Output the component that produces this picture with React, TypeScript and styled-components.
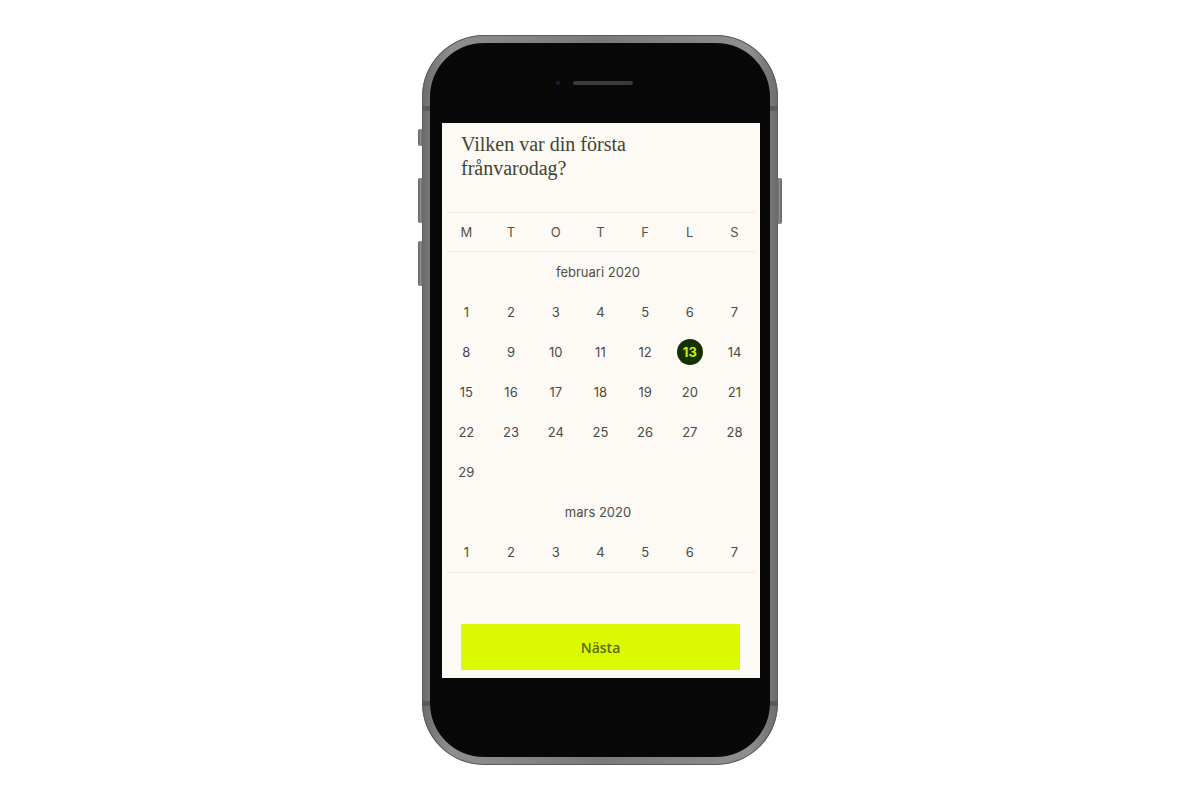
import { createGlobalStyle, styled } from 'styled-components';

const GlobalStyle = createGlobalStyle`
  html, body {
    margin: 0;
    padding: 0;
    background: #ffffff;
  }
  * {
    box-sizing: border-box;
  }
`;

const Page = styled.div`
  width: 1200px;
  height: 800px;
  display: flex;
  align-items: center;
  justify-content: center;
`;

const Phone = styled.div`
  position: relative;
  width: 356px;
  height: 730px;
  padding: 8px;
  border-radius: 62px;
  background: linear-gradient(90deg, #6d6d6d 0%, #8e8e8e 8%, #7a7a7a 50%, #8e8e8e 92%, #6d6d6d 100%);
  box-shadow: inset 0 0 0 1px #5c5c5c;
`;

const SideButton = styled.div<{ $side: 'left' | 'right'; $top: number; $height: number }>`
  position: absolute;
  ${(p) => (p.$side === 'left' ? 'left: -4px;' : 'right: -4px;')}
  top: ${(p) => p.$top}px;
  width: 5px;
  height: ${(p) => p.$height}px;
  border-radius: 2px;
  background: linear-gradient(90deg, #5e5e5e, #8c8c8c, #5e5e5e);
`;

const Band = styled.div<{ $side: 'left' | 'right'; $top: number }>`
  position: absolute;
  ${(p) => (p.$side === 'left' ? 'left: 0;' : 'right: 0;')}
  top: ${(p) => p.$top}px;
  width: 8px;
  height: 5px;
  background: #5a5a5a;
`;

const Inner = styled.div`
  width: 100%;
  height: 100%;
  border-radius: 54px;
  background: #080808;
  display: flex;
  flex-direction: column;
  padding: 0 10px 79px 12px;
`;

const TopArea = styled.div`
  height: 80px;
  display: flex;
  align-items: center;
  justify-content: center;
  gap: 13px;
  padding-right: 14px;
`;

const Camera = styled.div`
  width: 4px;
  height: 4px;
  border-radius: 50%;
  background: #1c2140;
`;

const Speaker = styled.div`
  width: 60px;
  height: 4px;
  border-radius: 2px;
  background: #3a3a3a;
`;

const Screen = styled.div`
  flex: 1;
  background: #fdf9f4;
  display: flex;
  flex-direction: column;
`;

const Title = styled.h1`
  margin: 9px 0 0;
  padding: 0 19px;
  font-family: 'Liberation Serif', 'DejaVu Serif', serif;
  font-weight: 400;
  font-size: 20px;
  line-height: 24px;
  color: #3d4536;
`;

const WeekHeader = styled.div`
  margin: 32px 5px 0;
  height: 40px;
  border-top: 1px solid #ede9e2;
  border-bottom: 1px solid #ede9e2;
`;

const Grid = styled.div<{ $rowHeight: number }>`
  margin-left: -3px;
  display: grid;
  grid-template-columns: repeat(7, 44.7px);
  grid-auto-rows: ${(p) => p.$rowHeight}px;
  align-items: center;
`;

const WeekDay = styled.span`
  text-align: center;
  font-family: Inter, 'Noto Sans', sans-serif;
  font-size: 13px;
  color: #51544c;
`;

const Months = styled.div`
  margin: 0 5px;
  border-bottom: 1px solid #ede9e2;
`;

const MonthLabel = styled.div`
  height: 40px;
  display: flex;
  align-items: center;
  justify-content: center;
  padding-right: 6px;
  font-family: Inter, 'Noto Sans', sans-serif;
  font-size: 13px;
  color: #4d4f49;
`;

const Day = styled.div<{ $selected?: boolean }>`
  display: flex;
  align-items: center;
  justify-content: center;
  font-family: Inter, 'Noto Sans', sans-serif;
  font-size: 13px;
  color: #484b44;

  span {
    width: 26px;
    height: 26px;
    border-radius: 50%;
    display: flex;
    align-items: center;
    justify-content: center;
    background: ${(p) => (p.$selected ? '#163100' : 'transparent')};
    color: ${(p) => (p.$selected ? '#cdf200' : 'inherit')};
    font-weight: ${(p) => (p.$selected ? 700 : 400)};
  }
`;

const NextButton = styled.button`
  margin: auto 20px 8px 19px;
  height: 46px;
  border: none;
  background: #dbf900;
  font-family: 'Open Sans', Lato, sans-serif;
  font-size: 14px;
  font-weight: 600;
  color: #5a6c10;
  cursor: pointer;
`;

const weekDays = ['M', 'T', 'O', 'T', 'F', 'L', 'S'];

const months = [
  { label: 'februari 2020', days: 29, selected: 13 },
  { label: 'mars 2020', days: 7, selected: 0 },
];

export default function App() {
  return (
    <Page>
      <GlobalStyle />
      <Phone>
        <SideButton $side="left" $top={94} $height={17} />
        <SideButton $side="left" $top={143} $height={45} />
        <SideButton $side="left" $top={206} $height={45} />
        <SideButton $side="right" $top={143} $height={46} />
        <Band $side="left" $top={71} />
        <Band $side="right" $top={71} />
        <Band $side="left" $top={666} />
        <Band $side="right" $top={666} />
        <Inner>
          <TopArea>
            <Camera />
            <Speaker />
          </TopArea>
          <Screen>
            <Title>
              Vilken var din första
              <br />
              frånvarodag?
            </Title>
            <WeekHeader>
              <Grid $rowHeight={38}>
                {weekDays.map((d, i) => (
                  <WeekDay key={i}>{d}</WeekDay>
                ))}
              </Grid>
            </WeekHeader>
            <Months>
              {months.map((m) => (
                <div key={m.label}>
                  <MonthLabel>{m.label}</MonthLabel>
                  <Grid $rowHeight={40}>
                    {Array.from({ length: m.days }, (_, i) => i + 1).map((n) => (
                      <Day key={n} $selected={n === m.selected}>
                        <span>{n}</span>
                      </Day>
                    ))}
                  </Grid>
                </div>
              ))}
            </Months>
            <NextButton>Nästa</NextButton>
          </Screen>
        </Inner>
      </Phone>
    </Page>
  );
}
